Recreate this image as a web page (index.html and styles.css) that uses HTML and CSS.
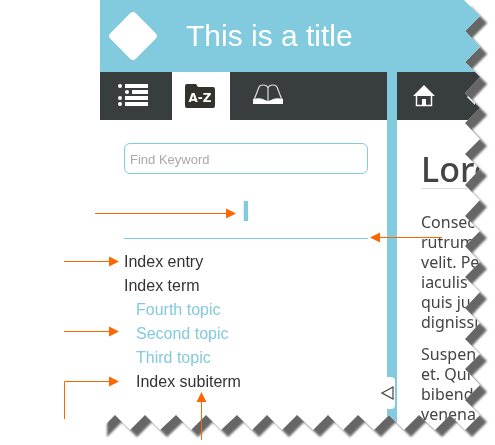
FILE: index.html
```html
<!DOCTYPE html>
<html lang="en">
<head>
<meta charset="utf-8">
<title>This is a title</title>
<link rel="stylesheet" href="styles.css">
</head>
<body>
<div class="figure">
  <div class="torn">
    <div class="sheet">
      <header class="banner">
        <svg class="logo" viewBox="0 0 50 50" aria-hidden="true"><rect x="7" y="7" width="36" height="36" rx="4" transform="rotate(45 25 25)" fill="#fff"/></svg>
        <h1>This is a title</h1>
      </header>
      <div class="panes">
        <section class="side">
          <nav class="bar">
            <button class="tab" aria-label="Contents">
              <svg width="30" height="24" viewBox="0 0 30 24" fill="#fff"><circle cx="2" cy="3" r="2"/><circle cx="9" cy="9" r="2"/><circle cx="2" cy="15" r="2"/><circle cx="2" cy="21" r="2"/><path d="M7 1h23v4H7zM14 7h16v4H14zM7 13h23v4H7zM7 19h23v4H7z"/></svg>
            </button>
            <button class="tab active" aria-label="Index">
              <svg width="30" height="24" viewBox="0 0 30 24"><path d="M2 0h9l2 3h15q2 0 2 2v17q0 2-2 2H2q-2 0-2-2V2q0-2 2-2z" fill="#33322c"/><text x="15" y="18" class="az">A-Z</text></svg>
            </button>
            <button class="tab wide" aria-label="Glossary">
              <svg width="30" height="20" viewBox="0 0 30 20"><path d="M1 16L6 3q1-2 4-2 4 0 5 3 1-3 5-3 3 0 4 2l5 13M15 3v14" fill="none" stroke="#ddd" stroke-width="1.200"/><path d="M0 15q8-2 12 1 2 1 3 1t3-1q4-3 12-1v5H0z" fill="#fff"/></svg>
            </button>
          </nav>
          <div class="index">
            <input class="search" type="text" placeholder="Find Keyword" aria-label="Find Keyword">
            <h2 class="letter">I</h2>
            <ul class="terms">
              <li>Index entry</li>
              <li>Index term
                <ul>
                  <li><a href="#">Fourth topic</a></li>
                  <li><a href="#">Second topic</a></li>
                  <li><a href="#">Third topic</a></li>
                  <li>Index subiterm</li>
                </ul>
              </li>
            </ul>
          </div>
        </section>
        <div class="divider">
          <button class="collapse" aria-label="Collapse"><svg width="13" height="14" viewBox="0 0 13 14"><path d="M1 7l11-6v12z" fill="#fff" stroke="#444" stroke-width="1.2"/></svg></button>
        </div>
        <main class="main">
          <nav class="bar tools">
            <button class="tool" aria-label="Home">
              <svg width="22" height="22" viewBox="0 0 22 22"><path d="M11 0L0 11h22zM9 20v-6h4v6z" fill="#fff"/><path d="M3.500 10.500v10h15v-10" fill="none" stroke="#fff" stroke-width="1.500"/></svg>
            </button>
            <button class="tool" aria-label="Back">
              <svg width="22" height="22" viewBox="0 0 22 22"><path d="M0 12l8-8v4h12v6H8v6z" fill="#fff"/></svg>
            </button>
          </nav>
          <article class="topic">
            <h2>Lore</h2>
            <p>Consec<br>rutrum<br>velit. Pe<br>iaculis<br>quis ju<br>dignissi</p>
            <p>Suspen<br>et. Qui<br>bibend<br>venena</p>
          </article>
        </main>
      </div>
    </div>
  </div>
  <svg class="arrows" width="495" height="445" viewBox="0 0 495 445" aria-hidden="true">
    <path class="line" d="M95 213.500h132M64 261.500h46M64 331.500h46M64.500 419v-37.500H110M201.500 440v-39M442 237.500h-63"/>
    <path class="head" d="M226 208.500l10 5-10 5zM109 256.500l10 5-10 5zM109 326.500l10 5-10 5zM109 376.500l10 5-10 5zM196.500 402l5-10 5 10zM380 232.500l-10 5 10 5z"/>
  </svg>
</div>
</body>
</html>
```

FILE: styles.css
```css
* { box-sizing: border-box; }
body { margin: 0; background: #fff; color: #333; font-family: "Liberation Sans", Arial, sans-serif; }
button { border: 0; padding: 0; background: none; }
svg { display: block; }
ul { list-style: none; margin: 0; padding: 0; }
.figure { position: relative; height: 100vh; overflow: hidden; }
.torn { padding: 0 15px 0 100px; filter: drop-shadow(7px 7px 1px #666); }
.sheet {
  --r: calc(100% - 15px);
  display: flex; flex-direction: column;
  height: calc(100vh - 15px);
  overflow: hidden;
  background: #fff;
  clip-path: polygon(0 0, calc(100% - 16px) 0,
    100% 16px, var(--r) 31px, 100% 47px, var(--r) 62px, 100% 77px, var(--r) 93px,
    100% 108px, var(--r) 123px, 100% 139px, var(--r) 154px, 100% 169px, var(--r) 185px,
    100% 200px, var(--r) 216px, 100% 231px, var(--r) 246px, 100% 262px, var(--r) 277px,
    100% 292px, var(--r) 308px, 100% 323px, var(--r) 339px, 100% 354px, var(--r) 369px,
    100% 385px, var(--r) 400px, 100% 415px,
    365px 100%, 350px var(--r), 335px 100%, 319px var(--r), 304px 100%, 289px var(--r),
    274px 100%, 258px var(--r), 243px 100%, 228px var(--r), 213px 100%, 197px var(--r),
    182px 100%, 167px var(--r), 152px 100%, 137px var(--r), 121px 100%, 106px var(--r),
    91px 100%, 76px var(--r), 60px 100%, 45px var(--r), 30px 100%, 15px var(--r), 0 100%);
}
.banner { flex: none; display: flex; align-items: center; gap: 28px; height: 72px; padding-left: 8px; background: #82cade; }
.logo { width: 50px; height: 50px; }
.banner h1 { margin: 0; color: #fff; font-size: 30px; font-weight: 400; }
.panes { flex: 1; display: flex; min-height: 0; }
.side { flex: none; width: 287px; }
.bar { display: flex; height: 48px; background: #383d3d; }
.tab { display: flex; justify-content: center; align-items: center; width: 58px; }
.tab:first-child { width: 72px; padding: 0 6px 2px 0; }
.tab.wide { width: 76px; padding-bottom: 4px; }
.active { padding-right: 2px; background: #fff; }
.az { fill: #fff; font: bold 12px "DejaVu Sans", sans-serif; text-anchor: middle; }
.index { padding: 23px 19px 0 24px; }
.search { display: block; width: 100%; height: 31px; padding: 2px 5px 0; border: 1px solid #82cade; border-radius: 6px; background: #fff; font: 13px "Liberation Sans", Arial, sans-serif; }
.search::placeholder { color: #a9a9a9; opacity: 1; }
.letter { margin: 20px 0 11px; padding-bottom: 10px; border-bottom: 1px solid #82cade; color: #82cade; font-size: 30px; line-height: 34px; text-align: center; }
.terms { font-size: 16px; line-height: 24px; }
.terms ul { padding-left: 12px; }
.terms a { color: #82cade; text-decoration: none; }
.divider { flex: none; display: flex; width: 10px; padding-top: 305px; background: #82cade; }
.collapse { display: flex; align-items: center; width: 8px; height: 32px; border-radius: 0 4px 4px 0; background: #fff; }
.collapse svg { flex: none; margin-left: -6px; }
.main { flex: 1; min-width: 0; }
.tools { gap: 32px; padding-left: 16px; align-items: center; }
.topic { padding: 31px 0 0 24px; font-family: "Noto Sans", sans-serif; font-size: 16px; line-height: 20px; color: #444; }
.topic h2 { margin: 0 0 23px; padding-bottom: 1px; border-bottom: 1px solid #ddd; font-size: 34px; font-weight: 500; line-height: 36px; }
.topic p { margin: 0 0 12px; white-space: nowrap; }
.arrows { position: absolute; top: 0; left: 0; }
.line { fill: none; stroke: #f60; }
.head { fill: #f60; }
```
